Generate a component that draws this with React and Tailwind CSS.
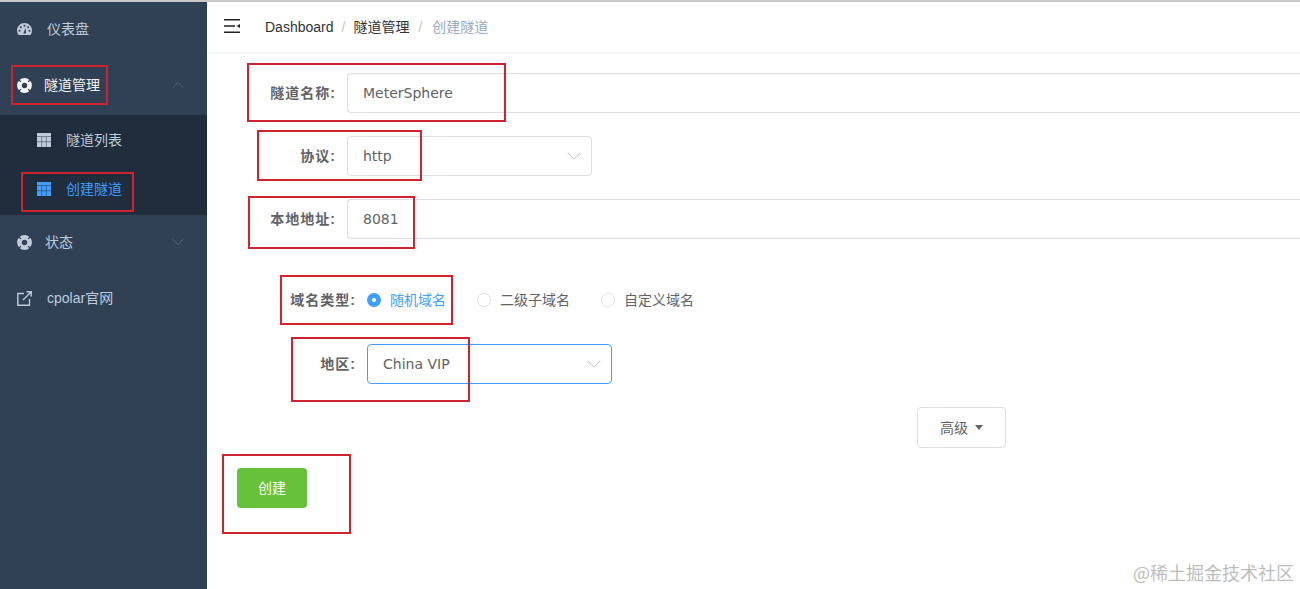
import { ChevronDown, ChevronUp } from "lucide-react";

const cjk = "font-['Liberation_Sans','Noto_Sans_CJK_SC',sans-serif]";
const dejavu = "font-['DejaVu_Sans','Noto_Sans_CJK_SC',sans-serif]";

function RedBox({ className }) {
  return <div className={`absolute border-2 border-[#cf2430] pointer-events-none ${className}`} />;
}

function DashIcon({ color }) {
  return (
    <svg width="15" height="12" viewBox="0 0 15 12" className="shrink-0">
      <path d="M7.5 0C3.4 0 0 3.3 0 7.5 0 9 .4 10.4 1.2 11.6c.1.2.3.4.6.4h11.4c.3 0 .5-.2.6-.4C14.6 10.4 15 9 15 7.5 15 3.3 11.600 0 7.500 0Z" fill={color} />
      <circle cx="7.500" cy="2.700" r="1" fill="#304156" />
      <circle cx="3.800" cy="4.300" r="1" fill="#304156" />
      <circle cx="2.500" cy="7.800" r="1" fill="#304156" />
      <circle cx="12.500" cy="7.800" r="1" fill="#304156" />
      <circle cx="11.200" cy="4.300" r="1" fill="#304156" />
      <path d="M6.300 10.500 8.700 4.800 9 10.500Z" fill="#304156" />
    </svg>
  );
}

function LifeRing({ color }) {
  return (
    <svg width="15" height="15" viewBox="0 0 16 16" className="shrink-0">
      <circle cx="8" cy="8" r="5.400" fill="none" stroke={color} strokeWidth="5" />
      <path d="M1.600 1.600 4.200 4.200M14.400 1.600 11.800 4.200M1.600 14.400 4.200 11.800M14.400 14.400 11.800 11.800" stroke="#304156" strokeWidth="1.300" />
    </svg>
  );
}

function TableIcon({ color, bg }) {
  return (
    <svg width="14" height="14" viewBox="0 0 14 14" className="shrink-0">
      <rect width="14" height="14" fill={color} />
      <path d="M0 3.500H14M4.700 3.500V14M9.300 3.500V14M0 8.700H14" stroke={bg} strokeWidth="0.700" strokeOpacity="0.650" />
    </svg>
  );
}

function LinkIcon({ color }) {
  return (
    <svg width="15" height="15" viewBox="0 0 15 15" fill="none" stroke={color} strokeWidth="1.400" className="shrink-0">
      <path d="M7 2.500H.8V14.200H12.500V8" />
      <path d="M6 9 14 1M9.500.8H14.200V5.500" />
    </svg>
  );
}

function NavRow({ icon, label, labelClass, chevron, rowClass, gap }) {
  return (
    <div className={`flex items-center pl-[17px] pr-[19px] ${rowClass}`}>
      <div className={`flex items-center ${gap}`}>
        {icon}
        <span className={`text-sm ${labelClass}`}>{label}</span>
      </div>
      {chevron && <div className="ml-auto">{chevron}</div>}
    </div>
  );
}

function SubRow({ color, bg, label, labelClass }) {
  return (
    <div className="h-[49px] flex items-center pl-[37px] gap-[15px]">
      <TableIcon color={color} bg={bg} />
      <span className={`text-sm ${labelClass}`}>{label}</span>
    </div>
  );
}

function Sidebar() {
  return (
    <aside className="w-[207px] shrink-0 bg-[#304156] pt-[1px]">
      <NavRow
        rowClass="h-[52px]"
        gap="gap-[15px]"
        icon={<DashIcon color="#bfcbd9" />}
        label="仪表盘"
        labelClass="text-[#bfcbd9]"
      />
      <NavRow
        rowClass="h-[60px]"
        gap="gap-[12px]"
        icon={<LifeRing color="#f4f4f5" />}
        label="隧道管理"
        labelClass="text-[#f4f4f5]"
        chevron={<ChevronUp size={20} color="#5f7186" strokeWidth={1} />}
      />
      <div className="bg-[#1f2d3d] h-[100px]">
        <SubRow color="#bfcbd9" bg="#1f2d3d" label="隧道列表" labelClass="text-[#bfcbd9]" />
        <SubRow color="#409eff" bg="#1f2d3d" label="创建隧道" labelClass="text-[#409eff]" />
      </div>
      <NavRow
        rowClass="h-[54px]"
        gap="gap-[13px]"
        icon={<LifeRing color="#bfcbd9" />}
        label="状态"
        labelClass="text-[#bfcbd9]"
        chevron={<ChevronDown size={20} color="#5f7186" strokeWidth={1} />}
      />
      <NavRow
        rowClass="h-[58px]"
        gap="gap-[15px]"
        icon={<LinkIcon color="#bfcbd9" />}
        label="cpolar官网"
        labelClass="text-[#bfcbd9]"
      />
    </aside>
  );
}

function Header() {
  return (
    <header className="h-[52px] shrink-0 flex items-center pl-[17px] border-b-2 border-[#f4f5f6]">
      <svg width="16" height="14" viewBox="0 0 16 14" className="mb-[3px]">
        <path d="M0 .8H16M0 7H11M0 13.200H16" stroke="#222" strokeWidth="1.600" />
        <path d="M16 5V9L12.500 7Z" fill="#222" />
      </svg>
      <nav className="ml-[25px] flex items-center text-sm mb-[1px]">
        <span className="text-[#303133]">Dashboard</span>
        <span className="mx-[8px] text-[#c0c4cc]">/</span>
        <span className="text-[#303133]">隧道管理</span>
        <span className="ml-[9px] mr-[10px] text-[#c0c4cc]">/</span>
        <span className="text-[#97a8be]">创建隧道</span>
      </nav>
    </header>
  );
}

function Label({ children, width }) {
  return (
    <label className={`${width} shrink-0 text-right pr-[11px] text-sm tracking-[1px] font-bold text-[#606266]`}>
      {children}
    </label>
  );
}

function Chevron() {
  return (
    <ChevronDown
      size={24}
      color="#c0c4cc"
      strokeWidth={1}
      className="absolute right-[5px] top-1/2 -translate-y-1/2"
    />
  );
}

function Radio({ label, checked, className }) {
  return (
    <div className={`flex items-center ${className}`}>
      {checked ? (
        <span className="w-[14px] h-[14px] rounded-full bg-[#409eff] flex items-center justify-center">
          <span className="w-[4px] h-[4px] rounded-full bg-white" />
        </span>
      ) : (
        <span className="w-[14px] h-[14px] rounded-full border border-[#dcdfe6] bg-white" />
      )}
      <span className={`ml-[9px] text-sm ${checked ? "text-[#409eff]" : "text-[#606266]"}`}>{label}</span>
    </div>
  );
}

function TunnelForm() {
  const field = `h-[40px] border border-[#dcdfe6] rounded-[4px] px-[15px] flex items-center text-sm text-[#606266] ${dejavu}`;
  return (
    <form className="relative flex-1 flex flex-col">
      <div className="flex items-center mt-[19px]">
        <Label width="w-[140px]">隧道名称:</Label>
        <div className={`${field} flex-1 rounded-r-none border-r-0`}>MeterSphere</div>
      </div>
      <div className="flex items-center mt-[23px]">
        <Label width="w-[140px]">协议:</Label>
        <div className={`${field} w-[245px] relative`}>
          http
          <Chevron />
        </div>
      </div>
      <div className="flex items-center mt-[23px]">
        <Label width="w-[140px]">本地地址:</Label>
        <div className={`${field} flex-1 rounded-r-none border-r-0`}>8081</div>
      </div>
      <div className="flex items-center mt-[41px] h-[40px]">
        <Label width="w-[160px]">域名类型:</Label>
        <Radio checked label="随机域名" />
        <Radio label="二级子域名" className="ml-[31px]" />
        <Radio label="自定义域名" className="ml-[31px]" />
      </div>
      <div className="flex items-center mt-[24px]">
        <Label width="w-[160px]">地区:</Label>
        <div className={`${field} w-[245px] relative !border-[#409eff]`}>
          China VIP
          <Chevron />
        </div>
      </div>
      <div className="mt-[23px] ml-[710px]">
        <button type="button" className="w-[89px] h-[41px] border border-[#dcdfe6] rounded-[4px] bg-white text-sm text-[#606266] flex items-center justify-center gap-[7px]">
          高级
          <span className="w-0 h-0 border-x-[4.500px] border-x-transparent border-t-[5px] border-t-[#606266]" />
        </button>
      </div>
      <div className="mt-[20px] ml-[30px]">
        <button type="button" className="w-[70px] h-[40px] rounded-[4px] bg-[#67c23a] text-sm text-white">
          创建
        </button>
      </div>
    </form>
  );
}

export default function App() {
  return (
    <div className={`relative w-[1300px] h-[589px] overflow-hidden bg-white ${cjk}`}>
      <div className="h-[2px] bg-[#c9c9c9]" />
      <div className="flex h-[587px]">
        <Sidebar />
        <main className="flex-1 flex flex-col min-w-0">
          <Header />
          <TunnelForm />
        </main>
      </div>

      {/* annotation boxes drawn over the screenshot */}
      <RedBox className="left-[11px] top-[65px] w-[97px] h-[40px]" />
      <RedBox className="left-[21px] top-[172px] w-[113px] h-[40px]" />
      <RedBox className="left-[247px] top-[63px] w-[259px] h-[59px]" />
      <RedBox className="left-[257px] top-[130px] w-[165px] h-[51px]" />
      <RedBox className="left-[248px] top-[196px] w-[167px] h-[53px]" />
      <RedBox className="left-[280px] top-[275px] w-[173px] h-[50px]" />
      <RedBox className="left-[291px] top-[337px] w-[179px] h-[65px]" />
      <RedBox className="left-[222px] top-[454px] w-[129px] h-[80px]" />

      <div className="absolute right-[6px] bottom-[8px] text-[18px] text-[#bdbdbd] leading-none font-['Noto_Sans_CJK_SC',sans-serif]">
        @稀土掘金技术社区
      </div>
    </div>
  );
}
